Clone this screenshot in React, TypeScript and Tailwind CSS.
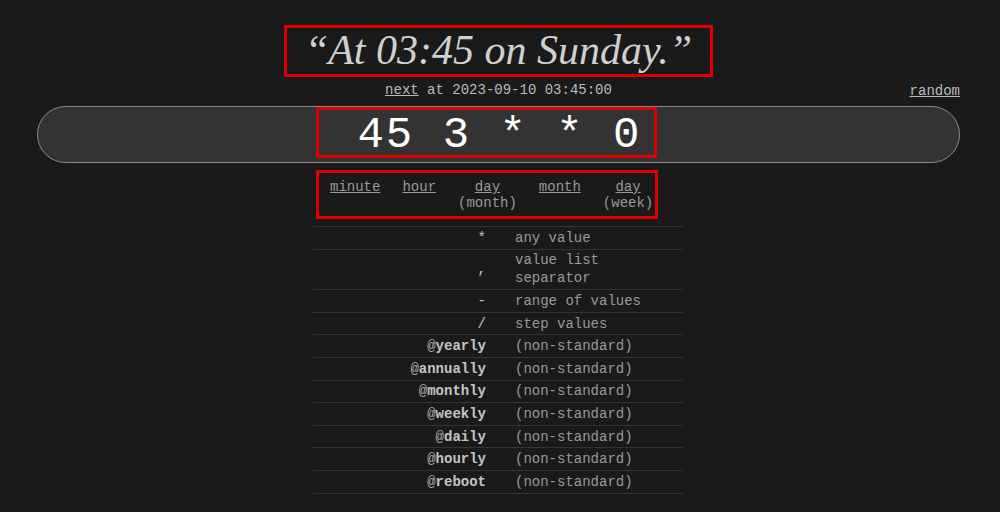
import React from 'react';

const mono = { fontFamily: '"Liberation Mono", "Courier New", monospace' };

const parts = [
  { top: 'minute' },
  { top: 'hour' },
  { top: 'day', sub: '(month)' },
  { top: 'month' },
  { top: 'day', sub: '(week)' },
];

const rows: { sym: string; at?: boolean; desc: string }[] = [
  { sym: '*', desc: 'any value' },
  { sym: ',', desc: 'value list separator' },
  { sym: '-', desc: 'range of values' },
  { sym: '/', desc: 'step values' },
  { sym: 'yearly', at: true, desc: '(non-standard)' },
  { sym: 'annually', at: true, desc: '(non-standard)' },
  { sym: 'monthly', at: true, desc: '(non-standard)' },
  { sym: 'weekly', at: true, desc: '(non-standard)' },
  { sym: 'daily', at: true, desc: '(non-standard)' },
  { sym: 'hourly', at: true, desc: '(non-standard)' },
  { sym: 'reboot', at: true, desc: '(non-standard)' },
];

export default function App() {
  return (
    <div className="min-h-screen bg-[#1a1a1a] text-[#cccccc]">
      <div className="ml-[37px] w-[923px] pt-[25px]">
        {/* Human readable schedule */}
        <div className="text-center">
          <h1
            className="inline-block border-[3px] border-[#e00000] px-[18px] pt-[1px] pb-[2px] text-[42px] leading-[43px] italic text-[#d0d0d0]"
            style={{ fontFamily: '"Liberation Serif", "Times New Roman", serif' }}
          >
            “At 03:45 on Sunday.”
          </h1>
        </div>

        <div className="relative mt-[5px] text-center text-[14px] leading-[17px] text-[#bbbbbb]" style={mono}>
          <span className="underline">next</span> at 2023-09-10 03:45:00
          <span className="absolute right-0 top-[1px] underline text-[#bbbbbb]">random</span>
        </div>

        {/* Expression input */}
        <div className="relative mt-[7px] flex h-[57px] items-center justify-center rounded-full border border-[#8a8a8a] bg-[#333333]">
          <span className="pl-[2px] text-[44px] leading-none tracking-[2px] text-white" style={mono}>
            45 3 * * 0
          </span>
          <div className="absolute left-[278px] top-0 h-[51px] w-[341px] border-[3px] border-[#e00000]" />
        </div>

        {/* Field labels */}
        <div
          className="ml-[279px] mt-[7px] inline-flex gap-[22px] border-[3px] border-[#e00000] pl-[11px] pr-[2px] pt-[6px] pb-[5px] text-[14px] leading-[16px] text-[#999999]"
          style={mono}
        >
          {parts.map((p, i) => (
            <div key={i} className="flex flex-col items-center">
              <span className="underline">{p.top}</span>
              {p.sub && <span>{p.sub}</span>}
            </div>
          ))}
        </div>

        {/* Syntax reference */}
        <div className="ml-[276px] mt-[7px] w-[370px] border-b border-[#333333] text-[14px] leading-[18px]" style={mono}>
          {rows.map((r, i) => (
            <div key={i} className="grid grid-cols-[185px_185px] border-t border-[#333333] py-[1.8px]">
              <div className="flex items-center justify-end pr-[12px] text-[#c4c4c4]">
                {r.at ? (
                  <span>
                    <span className="text-[#aaaaaa]">@</span>
                    <b className="font-bold">{r.sym}</b>
                  </span>
                ) : (
                  <span>{r.sym}</span>
                )}
              </div>
              <div className="pl-[17px] pr-[12px] text-[#999999]">{r.desc}</div>
            </div>
          ))}
        </div>
      </div>
    </div>
  );
}
